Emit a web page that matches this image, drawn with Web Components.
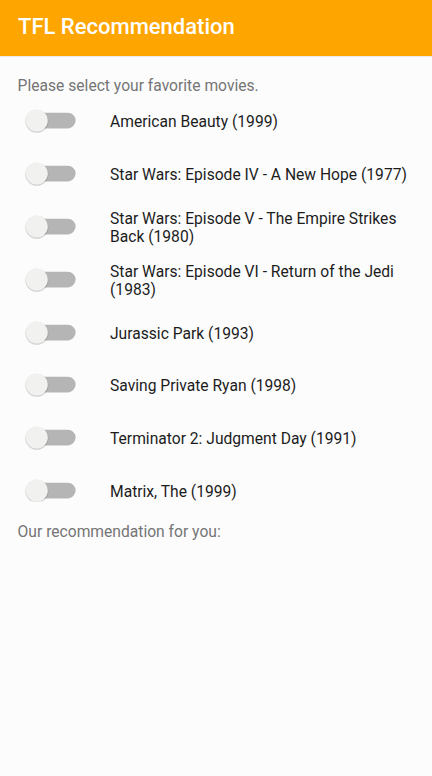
<!DOCTYPE html>
<html lang="en"><head><meta charset="utf-8"><title>TFL Recommendation</title>
<style>html,body{margin:0;height:100%;background:#fcfcfd}body{font-family:Roboto,sans-serif;overflow:hidden}</style></head><body>
<movie-app></movie-app>
<script>
customElements.define('app-bar', class extends HTMLElement{
 constructor(){super();this.attachShadow({mode:'open'}).innerHTML=`<style>
 :host{display:flex;align-items:center;box-sizing:border-box;height:56px;padding:0 18px 2px;background:#ffa500;color:#fff;font-size:22px;line-height:26px;font-weight:500;white-space:nowrap;box-shadow:0 1px 1px rgba(150,80,100,.1)}
 </style><slot></slot>`}});
customElements.define('movie-switch', class extends HTMLElement{
 constructor(){super();this.attachShadow({mode:'open'}).innerHTML=`<style>
 :host{display:block;width:52px;height:28px}svg{display:block;overflow:visible}
 </style><svg width="52" height="28" viewBox="0 0 52 28"><rect x="4" y="5.8" width="46.6" height="15.6" rx="7.8" fill="#b5b5b5"/><circle cx="11.8" cy="14.3" r="11.5" fill="#000" opacity=".16"/><circle cx="11.8" cy="13.5" r="11" fill="#f1f1ef"/></svg>`}});
customElements.define('movie-row', class extends HTMLElement{
 constructor(){super();this.attachShadow({mode:'open'}).innerHTML=`<style>
 :host{display:grid;grid-template-columns:85px 300px;align-items:center;height:52.8px;color:#1c1c1c;font-size:15.63px;line-height:18px}
 span{padding-top:2px}
 :host(:last-child) movie-switch{clip-path:inset(-2px 0 3.4px -2px)}
 </style><movie-switch></movie-switch><span><slot></slot></span>`}});
customElements.define('movie-app', class extends HTMLElement{
 constructor(){super();this.attachShadow({mode:'open'}).innerHTML=`<style>
 :host{display:block}p{margin:0;font-size:15.63px;line-height:19px;color:#757575;padding-left:17.6px}
 .top{padding-top:20px}.list{padding-left:25px}.result{padding-top:5px}
 </style><app-bar>TFL Recommendation</app-bar><p class="top">Please select your favorite movies.</p>
 <div class="list">${['American Beauty (1999)','Star Wars: Episode IV - A New Hope (1977)','Star Wars: Episode V - The Empire Strikes Back (1980)','Star Wars: Episode VI - Return of the Jedi (1983)','Jurassic Park (1993)','Saving Private Ryan (1998)','Terminator 2: Judgment Day (1991)','Matrix, The (1999)'].map(t=>`<movie-row>${t}</movie-row>`).join('')}</div>
 <p class="result">Our recommendation for you:</p>`}});
</script></body></html>
